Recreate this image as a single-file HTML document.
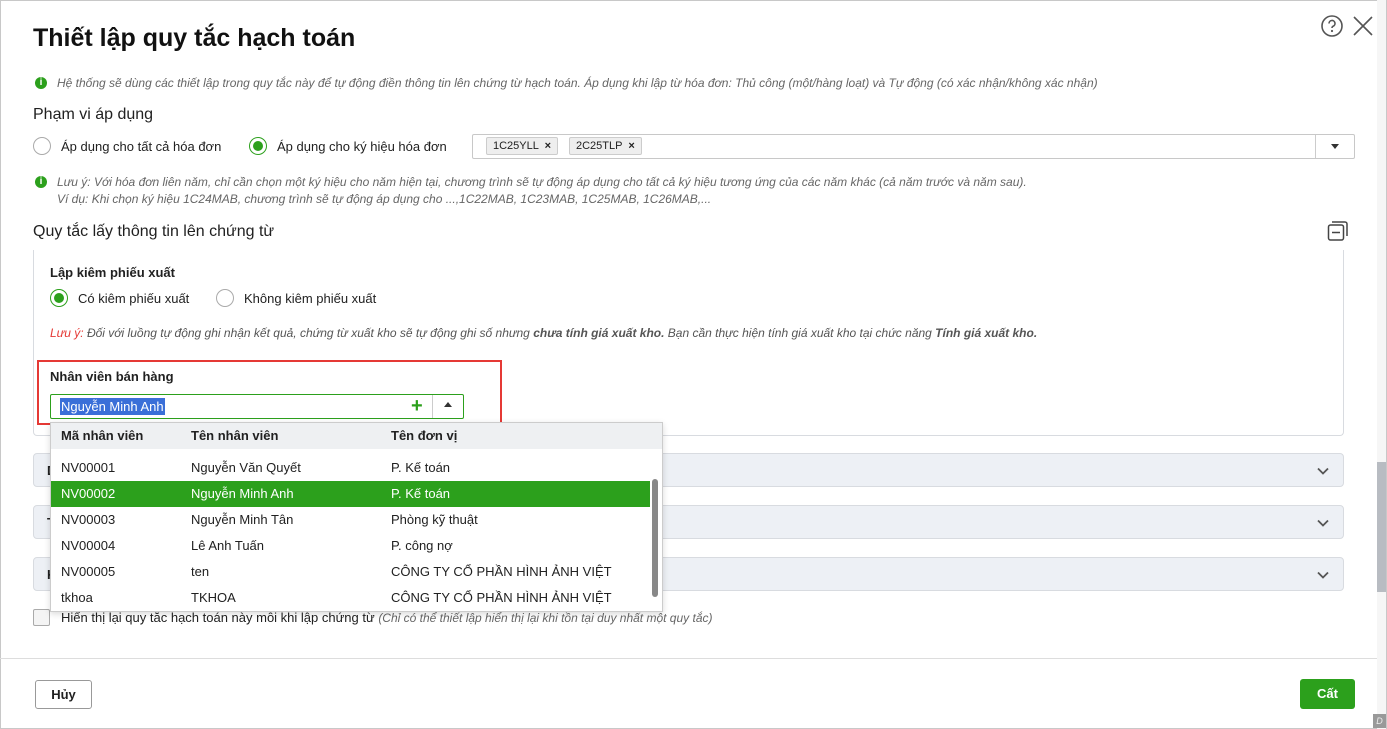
<!DOCTYPE html>
<html><head><meta charset="utf-8"><style>
*{box-sizing:border-box;margin:0;padding:0}
body{width:1387px;height:729px;overflow:hidden;background:#fff;font-family:"Liberation Sans","Noto Sans CJK SC",sans-serif;color:#212121;position:relative}
.a{position:absolute;white-space:nowrap}
.dlg{position:absolute;left:0;top:0;width:1387px;height:729px;border:1px solid #c8c8c8}
.it{font-style:italic;font-size:12px;color:#666}
.ic{width:12px;height:12px;border-radius:50%;background:#2ca01c;color:#fff;font-size:10px;font-weight:bold;text-align:center;line-height:12px;font-style:normal}
.rad{width:18px;height:18px;border-radius:50%;border:1px solid #aaa;background:#fff}
.rad.on{border-color:#2ca01c}
.rad.on::after{content:"";position:absolute;left:3px;top:3px;width:10px;height:10px;border-radius:50%;background:#2ca01c}
.t13{font-size:13px}
.acc{position:absolute;left:33px;width:1311px;height:34px;background:#edf0f5;border:1px solid #d8dbe0;border-radius:4px;font-size:13px;font-weight:bold}
.acc b{position:absolute;left:13px;top:9px}
.chev{position:absolute;right:12px;top:9px}
.row{position:absolute;left:0;width:599px;height:26px;font-size:13px}
.row span{position:absolute;top:5px}
</style></head><body>
<div class="dlg"></div>
<div class="a" style="left:33px;top:24px;font-size:25px;font-weight:bold;color:#111">Thiết lập quy tắc hạch toán</div>
<svg class="a" style="left:1320px;top:14px" width="24" height="24" viewBox="0 0 24 24"><circle cx="12" cy="12" r="10" fill="none" stroke="#555" stroke-width="1.6"/><path d="M9 9.5a3 3 0 1 1 4 2.8c-.8.4-1 .9-1 1.7" fill="none" stroke="#555" stroke-width="1.6"/><circle cx="12" cy="17" r="1.1" fill="#555"/></svg>
<svg class="a" style="left:1352px;top:15px" width="22" height="22" viewBox="0 0 22 22"><path d="M2 2L20 20M20 2L2 20" stroke="#555" stroke-width="1.6"/></svg>
<div class="a ic" style="left:35px;top:77px">i</div>
<div class="a it" style="left:57px;top:76px">Hệ thống sẽ dùng các thiết lập trong quy tắc này để tự động điền thông tin lên chứng từ hạch toán. Áp dụng khi lập từ hóa đơn: Thủ công (một/hàng loạt) và Tự động (có xác nhận/không xác nhận)</div>
<div class="a" style="left:33px;top:106px;font-size:16px">Phạm vi áp dụng</div>
<div class="a rad" style="left:33px;top:137px"></div>
<div class="a t13" style="left:61px;top:139px">Áp dụng cho tất cả hóa đơn</div>
<div class="a rad on" style="left:249px;top:137px"></div>
<div class="a t13" style="left:277px;top:139px">Áp dụng cho ký hiệu hóa đơn</div>
<div class="a" style="left:472px;top:134px;width:883px;height:25px;border:1px solid #c8c8c8;border-radius:2px"></div>
<div class="a" style="left:1315px;top:135px;width:1px;height:23px;background:#ccc"></div>
<div class="a" style="left:1331px;top:144px;width:0;height:0;border-left:4px solid transparent;border-right:4px solid transparent;border-top:5px solid #333"></div>
<div class="a" style="left:486px;top:137px;height:18px;padding:0 6px;background:#eee;border:1px solid #ccc;border-radius:2px;font-size:11px;line-height:16px">1C25YLL &nbsp;<b>×</b></div>
<div class="a" style="left:569px;top:137px;height:18px;padding:0 6px;background:#eee;border:1px solid #ccc;border-radius:2px;font-size:11px;line-height:16px">2C25TLP &nbsp;<b>×</b></div>
<div class="a ic" style="left:35px;top:176px">i</div>
<div class="a it" style="left:57px;top:175px">Lưu ý: Với hóa đơn liên năm, chỉ cần chọn một ký hiệu cho năm hiện tại, chương trình sẽ tự động áp dụng cho tất cả ký hiệu tương ứng của các năm khác (cả năm trước và năm sau).</div>
<div class="a it" style="left:57px;top:192px">Ví dụ: Khi chọn ký hiệu 1C24MAB, chương trình sẽ tự động áp dụng cho ...,1C22MAB, 1C23MAB, 1C25MAB, 1C26MAB,...</div>
<div class="a" style="left:33px;top:223px;font-size:16px">Quy tắc lấy thông tin lên chứng từ</div>
<svg class="a" style="left:1327px;top:220px" width="22" height="22" viewBox="0 0 22 22"><rect x="1.5" y="5" width="15" height="15" rx="2" fill="none" stroke="#444" stroke-width="1.5"/><path d="M5 2h13a2 2 0 0 1 2 2v12" fill="none" stroke="#444" stroke-width="1.5"/><path d="M5 12.5h8" stroke="#444" stroke-width="1.5"/></svg>
<div class="a" style="left:33px;top:250px;width:1311px;height:186px;border:1px solid #d8dbe0;border-top:none;border-radius:0 0 4px 4px"></div>
<div class="a" style="left:50px;top:265px;font-size:13px;font-weight:bold">Lập kiêm phiếu xuất</div>
<div class="a rad on" style="left:50px;top:289px"></div>
<div class="a t13" style="left:78px;top:291px">Có kiêm phiếu xuất</div>
<div class="a rad" style="left:216px;top:289px"></div>
<div class="a t13" style="left:244px;top:291px">Không kiêm phiếu xuất</div>
<div class="a it" style="left:50px;top:326px;color:#555"><span style="color:#e53935">Lưu ý:</span> Đối với luồng tự động ghi nhận kết quả, chứng từ xuất kho sẽ tự động ghi số nhưng <b>chưa tính giá xuất kho.</b> Bạn cần thực hiện tính giá xuất kho tại chức năng <b>Tính giá xuất kho.</b></div>
<div class="acc" style="top:453px"><b>D</b><svg class="chev" width="16" height="16" viewBox="0 0 16 16"><path d="M3 5.5l5 5 5-5" fill="none" stroke="#555" stroke-width="1.8"/></svg></div>
<div class="acc" style="top:505px"><b>T</b><svg class="chev" width="16" height="16" viewBox="0 0 16 16"><path d="M3 5.5l5 5 5-5" fill="none" stroke="#555" stroke-width="1.8"/></svg></div>
<div class="acc" style="top:557px"><b>K</b><svg class="chev" width="16" height="16" viewBox="0 0 16 16"><path d="M3 5.5l5 5 5-5" fill="none" stroke="#555" stroke-width="1.8"/></svg></div>
<div class="a" style="left:33px;top:609px;width:17px;height:17px;border:1px solid #aaa;border-radius:2px;background:#f4f4f4"></div>
<div class="a t13" style="left:61px;top:610px">Hiển thị lại quy tắc hạch toán này mỗi khi lập chứng từ <i style="color:#666;font-size:12px">(Chỉ có thể thiết lập hiển thị lại khi tồn tại duy nhất một quy tắc)</i></div>
<div class="a" style="left:37px;top:360px;width:465px;height:65px;border:2px solid #e53935"></div>
<div class="a" style="left:50px;top:369px;font-size:13px;font-weight:bold">Nhân viên bán hàng</div>
<div class="a" style="left:50px;top:394px;width:414px;height:25px;border:1px solid #2ca01c;border-radius:2px"></div>
<div class="a" style="left:60px;top:398px;height:17px;background:#3a6fd8;color:#fff;font-size:13px;padding:0 1px;line-height:17px">Nguyễn Minh Anh</div>
<div class="a" style="left:411px;top:395px;color:#2ca01c;font-size:20px;line-height:22px;font-weight:bold">+</div>
<div class="a" style="left:432px;top:395px;width:1px;height:23px;background:#ccc"></div>
<div class="a" style="left:444px;top:402px;width:0;height:0;border-left:4px solid transparent;border-right:4px solid transparent;border-bottom:5px solid #333"></div>
<div class="a" style="left:50px;top:422px;width:613px;height:190px;border:1px solid #ccc;background:#fff;box-shadow:0 2px 6px rgba(0,0,0,.15)">
<div class="row" style="top:0;background:#eef0f2;width:611px;font-weight:bold"><span style="left:10px">Mã nhân viên</span><span style="left:140px">Tên nhân viên</span><span style="left:340px">Tên đơn vị</span></div>
<div class="row" style="top:32px"><span style="left:10px">NV00001</span><span style="left:140px">Nguyễn Văn Quyết</span><span style="left:340px">P. Kế toán</span></div>
<div class="row" style="top:58px;background:#2ca01c;color:#fff"><span style="left:10px">NV00002</span><span style="left:140px">Nguyễn Minh Anh</span><span style="left:340px">P. Kế toán</span></div>
<div class="row" style="top:84px"><span style="left:10px">NV00003</span><span style="left:140px">Nguyễn Minh Tân</span><span style="left:340px">Phòng kỹ thuật</span></div>
<div class="row" style="top:110px"><span style="left:10px">NV00004</span><span style="left:140px">Lê Anh Tuấn</span><span style="left:340px">P. công nợ</span></div>
<div class="row" style="top:136px"><span style="left:10px">NV00005</span><span style="left:140px">ten</span><span style="left:340px">CÔNG TY CỔ PHẦN HÌNH ẢNH VIỆT</span></div>
<div class="row" style="top:162px"><span style="left:10px">tkhoa</span><span style="left:140px">TKHOA</span><span style="left:340px">CÔNG TY CỔ PHẦN HÌNH ẢNH VIỆT</span></div>
<div class="a" style="left:601px;top:56px;width:6px;height:118px;background:#888;border-radius:3px"></div>
</div>
<div class="a" style="left:0;top:658px;width:1377px;height:1px;background:#ddd"></div>
<div class="a" style="left:35px;top:680px;width:57px;height:29px;border:1px solid #999;border-radius:3px;font-size:13px;font-weight:bold;text-align:center;line-height:27px">Hủy</div>
<div class="a" style="left:1300px;top:679px;width:55px;height:30px;background:#2ca01c;border-radius:3px;color:#fff;font-size:13px;font-weight:bold;text-align:center;line-height:30px">Cất</div>
<div class="a" style="left:1377px;top:0;width:9px;height:729px;background:#f6f6f6"></div>
<div class="a" style="left:1377px;top:462px;width:9px;height:130px;background:#b8bcc2"></div>
<div class="a" style="left:1373px;top:714px;width:13px;height:14px;background:#999;color:#eee;font-size:9px;font-style:italic;text-align:center;line-height:14px">D</div>
</body></html>
